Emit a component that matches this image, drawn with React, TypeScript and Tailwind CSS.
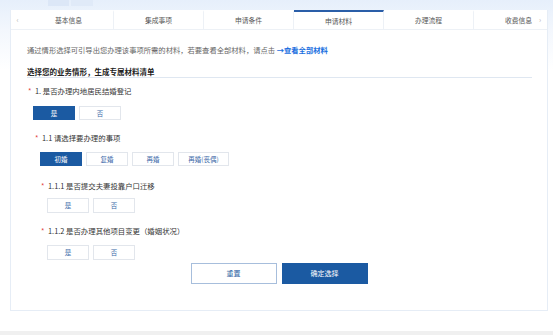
import React from "react";

const font = { fontFamily: '"Noto Sans CJK SC", "Noto Sans", sans-serif' };

function Opt({ label, active, w = "w-[42px]", h = "h-[14px]" }: { label: string; active?: boolean; w?: string; h?: string }) {
  return (
    <div
      className={`${w} ${h} flex items-center justify-center text-[6.5px] leading-none ${
        active ? "bg-[#1b5aa2] text-white border border-[#1b5aa2]" : "bg-white text-[#3a68a8] border border-[#e2e6ec]"
      }`}
    >
      {label}
    </div>
  );
}

function Q({ text, indent }: { text: string; indent: string }) {
  return (
    <div className={`flex items-center h-[10px] ${indent} text-[7.4px] leading-[10px] text-[#333]`}>
      <span className="text-[#e23c3c] w-[7px]">*</span>
      <span>{text}</span>
    </div>
  );
}

export default function App() {
  const tabs = ["基本信息", "集成事项", "申请条件", "申请材料", "办理流程", "收费信息"];
  return (
    <div
      className="w-[553px] h-[335px] overflow-hidden flex flex-col bg-[linear-gradient(180deg,#e6effb_0px,#f3f7fd_30px,#ffffff_70px)]"
      style={font}
    >
      <div className="h-[10px] flex pl-[48px] gap-[2px] shrink-0">
        <div className="w-[21px] h-[6px] bg-[#dce7f7]" />
        <div className="w-[22px] h-[6px] bg-[#e0eaf8]" />
      </div>
      <div className="ml-[10px] mr-[5px] h-[301px] bg-white border border-[#e6edf6] border-t-0 flex flex-col shrink-0">
        <div className="relative h-[20px] flex border-b border-[#edf1f6] shrink-0">
          <div className="w-[13px] flex items-center justify-center text-[7px] text-[#b0b0b0]">‹</div>
          <div className="flex-1 flex overflow-hidden">
            {tabs.map((t, i) => (
              <div
                key={t}
                className={`w-[90px] shrink-0 flex items-center justify-center text-[6.8px] text-[#555] border-r border-[#edf1f6] ${
                  i === 3 ? "border-t-2 border-t-[#2a5ea8] bg-white -mb-[1px]" : "border-t-2 border-t-transparent"
                }`}
              >
                {t}
              </div>
            ))}
          </div>
          <div className="absolute right-0 top-0 h-full w-[14px] bg-white flex items-center justify-center text-[7px] text-[#b0b0b0]">›</div>
        </div>
        <div className="pl-[16px] pr-[15px] flex flex-col">
          <div className="mt-[15px] h-[10px] text-[7.3px] leading-[10px] text-[#666] whitespace-nowrap">
            通过情形选择可引导出您办理该事项所需的材料，若要查看全部材料，请点击 <span className="text-[#1b6fe0] font-bold">→查看全部材料</span>
          </div>
          <div className="mt-[12px] h-[11px] w-full border-b border-[#dfe7f1] text-[7.5px] leading-[10px] font-bold text-[#222]">
            选择您的业务情形，生成专属材料清单
          </div>
          <div className="mt-[8px]">
            <Q text="1. 是否办理内地居民结婚登记" indent="pl-[1px]" />
          </div>
          <div className="mt-[10px] flex gap-[4px] pl-[6px]">
            <Opt label="是" active />
            <Opt label="否" />
          </div>
          <div className="mt-[13px]">
            <Q text="1.1 请选择要办理的事项" indent="pl-[8px]" />
          </div>
          <div className="mt-[9px] flex gap-[4px] pl-[13px]">
            <Opt label="初婚" active />
            <Opt label="复婚" />
            <Opt label="再婚" />
            <Opt label="再婚(丧偶)" w="w-[51px]" />
          </div>
          <div className="mt-[15px]">
            <Q text="1.1.1 是否提交夫妻投靠户口迁移" indent="pl-[14px]" />
          </div>
          <div className="mt-[7px] flex gap-[4px] pl-[20px]">
            <Opt label="是" h="h-[15px]" />
            <Opt label="否" h="h-[15px]" />
          </div>
          <div className="mt-[13px]">
            <Q text="1.1.2 是否办理其他项目变更（婚姻状况）" indent="pl-[14px]" />
          </div>
          <div className="mt-[9px] flex gap-[4px] pl-[20px]">
            <Opt label="是" h="h-[15px]" />
            <Opt label="否" h="h-[15px]" />
          </div>
          <div className="mt-[3px] flex justify-center gap-[5px] pr-[1px]">
            <div className="w-[86px] h-[21px] border border-[#a7bedc] bg-white text-[#2c5fa3] text-[7px] flex items-center justify-center">
              重置
            </div>
            <div className="w-[86px] h-[21px] bg-[#1b5aa2] border border-[#1b5aa2] text-white text-[7px] flex items-center justify-center">
              确定选择
            </div>
          </div>
        </div>
      </div>
      <div className="flex-1 bg-white" />
      <div className="h-[4px] bg-[#f0f0f0] shrink-0" />
    </div>
  );
}
